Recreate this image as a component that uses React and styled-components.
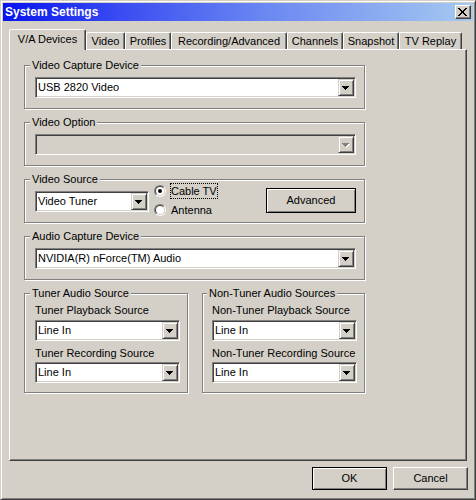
import React from 'react';
import styled, { createGlobalStyle } from 'styled-components';

const Global = createGlobalStyle`
  html, body { margin: 0; padding: 0; background: #D4D0C8; }
  body { font-family: "Liberation Sans", Arial, sans-serif; font-size: 11px; color: #000; }
  * { box-sizing: border-box; }
`;

const Window = styled.div`
  width: 476px;
  height: 500px;
  display: flex;
  flex-direction: column;
  background: #D4D0C8;
  border: 1px solid;
  border-color: #D4D0C8 #404040 #404040 #D4D0C8;
  box-shadow: inset 1px 1px #fff, inset -1px -1px #808080;
  padding: 2px;
`;

const TitleBar = styled.div`
  height: 18px;
  flex: none;
  display: flex;
  align-items: center;
  padding: 0 2px;
  background: linear-gradient(90deg, #0814EE 0%, #3A4CF2 25%, #6A86F2 55%, #A6CAF0 100%);
`;

const TitleText = styled.div`
  flex: 1;
  color: #fff;
  font-weight: bold;
  font-size: 12px;
  line-height: 18px;
  white-space: nowrap;
`;

const CloseBtn = styled.div`
  width: 16px;
  height: 14px;
  background: #D4D0C8;
  border: 1px solid;
  border-color: #fff #404040 #404040 #fff;
  box-shadow: inset -1px -1px #808080;
  padding: 2px 0 0 2px;
`;

const PixelSvg = styled.svg`
  display: block;
  shape-rendering: crispEdges;
`;

const X_PATTERN = [
  'XX.....XX',
  '.XX...XX.',
  '..XX.XX..',
  '...XXX...',
  '...XXX...',
  '..XX.XX..',
  '.XX...XX.',
  'XX.....XX',
];

const CloseGlyph = () => (
  <PixelSvg width="9" height="8" viewBox="0 0 9 8">
    {X_PATTERN.flatMap((row, y) =>
      row.split('').map((c, x) =>
        c === 'X' ? <rect key={`${x}-${y}`} x={x} y={y} width="1" height="1" fill="#000" /> : null
      )
    )}
  </PixelSvg>
);

const TRI = 'M0 0h7v1h-1v1h-1v1h-1v1h-1v-1h-1v-1h-1v-1h-1z';

const Arrow = ({ disabled }) => (
  <PixelSvg width="8" height="5" viewBox="0 0 8 5">
    {disabled && <path d={TRI} transform="translate(1 1)" fill="#fff" />}
    <path d={TRI} fill={disabled ? '#808080' : '#000'} />
  </PixelSvg>
);

const Body = styled.div`
  flex: 1;
  display: flex;
  flex-direction: column;
  padding: 8px 6px 0 6px;
`;

const TabStrip = styled.div`
  display: flex;
  align-items: flex-end;
  height: 20px;
`;

const Tab = styled.div`
  flex: none;
  width: ${p => p.$w}px;
  height: ${p => (p.$active ? 21 : 17)}px;
  margin-bottom: ${p => (p.$active ? -1 : 0)}px;
  position: relative;
  z-index: ${p => (p.$active ? 1 : 0)};
  background: #D4D0C8;
  border-top: 1px solid #fff;
  border-left: 1px solid #fff;
  border-right: 1px solid #404040;
  border-radius: 2px 2px 0 0;
  box-shadow: inset -1px 0 #808080;
  padding-top: ${p => (p.$active ? 3 : 2)}px;
  line-height: 13px;
  text-align: center;
  white-space: nowrap;
`;

const Panel = styled.div`
  width: 458px;
  height: 412px;
  flex: none;
  border-top: 1px solid #fff;
  border-left: 1px solid #fff;
  border-right: 1px solid #404040;
  border-bottom: 1px solid #404040;
  box-shadow: inset -1px -1px #808080;
  padding: 9px 0 0 14px;
`;

const Stack = styled.div`
  display: flex;
  flex-direction: column;
  gap: 7px;
`;

const GroupRow = styled.div`
  display: flex;
  gap: 14px;
`;

const Group = styled.fieldset`
  margin: 0;
  min-width: 0;
  width: ${p => p.$w}px;
  border: 1px solid #808080;
  box-shadow: inset 1px 1px #fff, 1px 1px #fff;
  padding: ${p => p.$pad || '5px 8px 10px 10px'};
  display: flex;
  flex-direction: column;
`;

const Legend = styled.legend`
  padding: 0 2px;
  margin-left: -5px;
  line-height: 13px;
  background: #D4D0C8;
  white-space: nowrap;
`;

const FieldLabel = styled.div`
  line-height: 13px;
  margin-top: ${p => p.$mt || 0}px;
  margin-bottom: ${p => p.$mb || 0}px;
  white-space: nowrap;
`;

const ComboBox = styled.div`
  flex: none;
  width: ${p => p.$w}px;
  height: 21px;
  display: flex;
  border: 1px solid;
  border-color: #808080 #fff #fff #808080;
  box-shadow: inset 1px 1px #404040, inset -1px -1px #D4D0C8;
  padding: 1px;
  background: ${p => (p.$disabled ? '#D4D0C8' : '#fff')};
`;

const ComboText = styled.div`
  flex: 1;
  padding-left: 1px;
  line-height: 17px;
  white-space: nowrap;
  overflow: hidden;
`;

const DropButton = styled.div`
  flex: none;
  width: 16px;
  height: 17px;
  background: #D4D0C8;
  border: 1px solid;
  border-color: #D4D0C8 #404040 #404040 #D4D0C8;
  box-shadow: inset 1px 1px #fff, inset -1px -1px #808080;
  padding: 6px 0 0 3px;
`;

const Combo = ({ w, value, disabled }) => (
  <ComboBox $w={w} $disabled={disabled}>
    <ComboText>{value}</ComboText>
    <DropButton>
      <Arrow disabled={disabled} />
    </DropButton>
  </ComboBox>
);

const SourceRow = styled.div`
  display: flex;
  align-items: flex-start;
  height: 21px;
`;

const RadioColumn = styled.div`
  display: flex;
  flex-direction: column;
  gap: 3px;
  margin: -8px 0 0 5px;
`;

const RadioRow = styled.div`
  display: flex;
  align-items: center;
  height: 16px;
`;

const RadioOuter = styled.span`
  flex: none;
  width: 12px;
  height: 12px;
  border-radius: 50%;
  border: 1px solid;
  border-color: #808080 #fff #fff #808080;
  margin-right: 4px;
  display: flex;
`;

const RadioInner = styled.span`
  flex: 1;
  border-radius: 50%;
  border: 1px solid;
  border-color: #404040 #D4D0C8 #D4D0C8 #404040;
  background: #fff;
  display: flex;
  align-items: center;
  justify-content: center;
`;

const RadioDot = styled.span`
  width: 4px;
  height: 4px;
  border-radius: 50%;
  background: #000;
`;

const RadioLabel = styled.span`
  line-height: 14px;
  border: 1px ${p => (p.$focus ? 'dotted #000' : 'solid transparent')};
  padding: 0;
  white-space: nowrap;
`;

const Radio = ({ checked, label, focus }) => (
  <RadioRow>
    <RadioOuter>
      <RadioInner>{checked && <RadioDot />}</RadioInner>
    </RadioOuter>
    <RadioLabel $focus={focus}>{label}</RadioLabel>
  </RadioRow>
);

const Button = styled.button`
  flex: none;
  width: ${p => p.$w}px;
  height: ${p => p.$h}px;
  margin: ${p => p.$m || '0'};
  padding: 0;
  font: inherit;
  font-size: 11px;
  color: #000;
  background: #D4D0C8;
  border: 1px solid;
  border-color: ${p => (p.$default ? '#000' : '#fff #404040 #404040 #fff')};
  box-shadow: ${p =>
    p.$default ? 'inset 1px 1px #fff, inset -1px -1px #808080' : 'inset -1px -1px #808080'};
  display: flex;
  align-items: center;
  justify-content: center;
  line-height: 13px;
`;

const ButtonRow = styled.div`
  display: flex;
  justify-content: flex-end;
  gap: 6px;
  margin: 6px -1px 0 0;
`;

const tabs = [
  { label: 'V/A Devices', w: 77, active: true },
  { label: 'Video', w: 39 },
  { label: 'Profiles', w: 46 },
  { label: 'Recording/Advanced', w: 116 },
  { label: 'Channels', w: 56 },
  { label: 'Snapshot', w: 56 },
  { label: 'TV Replay', w: 63 },
];

export default function App() {
  return (
    <>
      <Global />
      <Window>
        <TitleBar>
          <TitleText>System Settings</TitleText>
          <CloseBtn>
            <CloseGlyph />
          </CloseBtn>
        </TitleBar>
        <Body>
          <TabStrip>
            {tabs.map(t => (
              <Tab key={t.label} $w={t.w} $active={t.active}>
                {t.label}
              </Tab>
            ))}
          </TabStrip>
          <Panel>
            <Stack>
              <Group $w={341}>
                <Legend>Video Capture Device</Legend>
                <Combo w={321} value="USB 2820 Video" />
              </Group>
              <Group $w={341}>
                <Legend>Video Option</Legend>
                <Combo w={321} value="" disabled />
              </Group>
              <Group $w={341}>
                <Legend>Video Source</Legend>
                <SourceRow>
                  <Combo w={114} value="Video Tuner" />
                  <RadioColumn>
                    <Radio checked focus label="Cable TV" />
                    <Radio label="Antenna" />
                  </RadioColumn>
                  <Button $default $w={90} $h={25} $m="-3px 0 0 auto">
                    Advanced
                  </Button>
                </SourceRow>
              </Group>
              <Group $w={341}>
                <Legend>Audio Capture Device</Legend>
                <Combo w={321} value="NVIDIA(R) nForce(TM) Audio" />
              </Group>
              <GroupRow>
                <Group $w={164} $pad="4px 7px 9px 10px">
                  <Legend>Tuner Audio Source</Legend>
                  <FieldLabel $mb={3}>Tuner Playback Source</FieldLabel>
                  <Combo w={145} value="Line In" />
                  <FieldLabel $mt={6} $mb={2}>Tuner Recording Source</FieldLabel>
                  <Combo w={145} value="Line In" />
                </Group>
                <Group $w={163} $pad="4px 7px 9px 9px">
                  <Legend>Non-Tuner Audio Sources</Legend>
                  <FieldLabel $mb={3}>Non-Tuner Playback Source</FieldLabel>
                  <Combo w={145} value="Line In" />
                  <FieldLabel $mt={6} $mb={2}>Non-Tuner Recording Source</FieldLabel>
                  <Combo w={145} value="Line In" />
                </Group>
              </GroupRow>
            </Stack>
          </Panel>
          <ButtonRow>
            <Button $default $w={75} $h={23}>
              OK
            </Button>
            <Button $w={75} $h={23}>
              Cancel
            </Button>
          </ButtonRow>
        </Body>
      </Window>
    </>
  );
}
